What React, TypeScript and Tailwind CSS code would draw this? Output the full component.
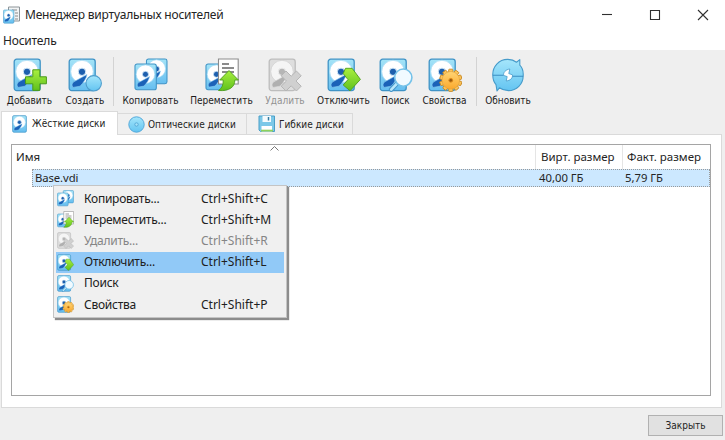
import React from 'react';

type Kind = 'disk' | 'add' | 'create' | 'copy' | 'move' | 'remove' | 'release' | 'search' | 'props' | 'refresh';

function Disk({ gray = false }: { gray?: boolean }) {
  const edge = gray ? '#bdbdbd' : '#3f93c6';
  return (
    <g>
      <rect x="1.2" y="1.2" width="26" height="31.4" rx="2.5" fill={gray ? '#dedede' : 'url(#diskFill)'} stroke={edge} strokeWidth="1.3" />
      <circle cx="14" cy="13.6" r="11.3" fill={gray ? '#f5f5f5' : '#ffffff'} stroke={gray ? '#cfcfcf' : '#a6d9f4'} strokeWidth="0.8" />
      <path d="M19 16.5C18.2 20.8 15.6 24.6 12 28.2L5 29.4C3.4 27.6 3.8 25.3 5.8 23.8Z" fill={gray ? '#b0b0b0' : '#1b62b8'} stroke={gray ? '#dddddd' : '#8ccdf2'} strokeWidth=".6" />
      <circle cx="14" cy="13.8" r="3.7" fill={gray ? '#b5b5b5' : '#1d5fae'} stroke={gray ? '#eeeeee' : '#d8ecfa'} strokeWidth="1" />
    </g>
  );
}

const teeth = [0, 36, 72, 108, 144, 180, 216, 252, 288, 324];

function Icon({ kind, size }: { kind: Kind; size: number }) {
  return (
    <svg width={size} height={size} viewBox="0 0 34 34" className="block shrink-0">
      {kind === 'copy' ? (
        <>
          <g transform="translate(11.5 0) scale(.79)"><Disk /></g>
          <g transform="translate(0 5) scale(.82)"><Disk /></g>
        </>
      ) : kind === 'move' ? (
        <g transform="translate(0 5) scale(.82)"><Disk /></g>
      ) : kind === 'refresh' ? null : (
        <Disk gray={kind === 'remove'} />
      )}
      {kind === 'add' && (
        <path d="M19.8 11.8h7v7h6.6v7h-6.6v6.6h-7v-6.6h-7.3v-7h7.3z" fill="url(#greenFill)" stroke="#4b9b1a" strokeWidth="1" strokeLinejoin="round" />
      )}
      {kind === 'create' && <circle cx="25.7" cy="25.3" r="7.7" fill="url(#blueFill)" stroke="#4f9dcc" strokeWidth="1.1" />}
      {kind === 'move' && (
        <>
          <path d="M13.5 1h19.7v25H13.5z" fill="#fff" stroke="#8b8b8b" strokeWidth="1.1" />
          <path d="M17 6h7M17 10h12M17 14h12" stroke="#666" strokeWidth="1.3" />
          <path d="M24 12.5 33.4 22h-3.6c.2 7-5.6 11.4-16.3 10.5 3.4-2.3 5-5.6 4.7-10.5h-3.5z" fill="url(#greenFill)" stroke="#4e9d1b" strokeWidth=".9" strokeLinejoin="round" />
        </>
      )}
      {kind === 'remove' && (
        <path d="m18 13 5.2 5.2 5.2-5.2 4.8 4.8-5.2 5.2 5.2 5.2-4.8 4.8-5.2-5.2L18 33l-4.8-4.8 5.2-5.2-5.2-5.2z" fill="#d0d0d0" stroke="#b5b5b5" strokeLinejoin="round" />
      )}
      {kind === 'release' && (
        <path d="M18.5 10.3h6.6L33.4 21.4 23 32.8l-6.8-5.8 4.8-5.4-4.8-6z" fill="url(#greenFill)" stroke="#4e9d1b" strokeWidth=".9" strokeLinejoin="round" />
      )}
      {kind === 'search' && (
        <>
          <path d="m18.5 25-6.3 6.6" stroke="#4394c8" strokeWidth="4.6" strokeLinecap="round" />
          <path d="m18.5 25-6.3 6.6" stroke="#b9e7fa" strokeWidth="2.6" strokeLinecap="round" />
          <circle cx="24.3" cy="19.6" r="8.6" fill="#f1faff" stroke="#75c2e9" strokeWidth="1.6" />
        </>
      )}
      {kind === 'props' && (
        <g>
          {teeth.map((a) => (
            <rect key={a} x="20.7" y="11.2" width="4.2" height="6" rx=".8" fill="#fcc45a" stroke="#c98922" strokeWidth=".9" transform={`rotate(${a} 22.8 22.3)`} />
          ))}
          <circle cx="22.8" cy="22.3" r="8.8" fill="url(#orangeFill)" stroke="#dfa03a" strokeWidth=".6" />
          <circle cx="22.8" cy="22.3" r="1.9" fill="#9a5a10" stroke="#e08d1c" />
        </g>
      )}
      {kind === 'refresh' && (
        <g strokeLinejoin="round">
          <path d="M1.8 17.2C1.4 8.5 8 1.4 16.5 1.4c3.6 0 6.6 1 9 2.8L28.8 1.6V7.2C31.4 9.8 32.4 13.8 32.2 17.4C32.2 26.2 25.6 32.6 17.4 32.6c-3.6 0-6.6-1-9-2.8L6 33 5 26.6C2.8 24 1.8 20.6 1.8 17.2z" fill="url(#blueFill)" stroke="#469bca" strokeWidth="1.1" />
          <path d="M1.8 17.2H13M20.8 18.2h11.4" stroke="#3c8fc2" strokeWidth="1.1" />
          <path d="M18.8 11c-4.2.6-6.6 3.4-6.2 6.4l3.6 1.2-1 4.4c4.4-.6 6.8-3 6.2-6.2l-3.6-1.2z" fill="#fff" stroke="#469bca" strokeWidth=".8" />
        </g>
      )}
    </svg>
  );
}

function Gradients() {
  return (
    <svg width="0" height="0" className="absolute">
      <defs>
        <linearGradient id="diskFill" x1="0" y1="0" x2="0" y2="1"><stop offset="0" stopColor="#a4e4f7" /><stop offset="1" stopColor="#65bef0" /></linearGradient>
        <linearGradient id="blueFill" x1="0" y1="0" x2="0" y2="1"><stop offset="0" stopColor="#a5e6fb" /><stop offset="1" stopColor="#63c4f1" /></linearGradient>
        <linearGradient id="greenFill" x1="0" y1="0" x2="0" y2="1"><stop offset="0" stopColor="#a9ef3f" /><stop offset="1" stopColor="#5fc11d" /></linearGradient>
        <linearGradient id="orangeFill" x1="0" y1="0" x2="0" y2="1"><stop offset="0" stopColor="#ffd474" /><stop offset="1" stopColor="#fba92d" /></linearGradient>
      </defs>
    </svg>
  );
}

function Tool({ kind, label, className }: { kind: Kind; label: string; className: string }) {
  return (
    <button className={`flex shrink-0 flex-col items-center pt-[8px] ${className}`}>
      <Icon kind={kind} size={34} />
      <span className={`whitespace-nowrap pt-px font-['DejaVu_Sans_Condensed','DejaVu_Sans',sans-serif] text-[10px] leading-4 [font-stretch:condensed] ${kind === 'remove' ? 'text-[#929292]' : 'text-[#1c1c1c]'}`}>{label}</span>
    </button>
  );
}

const menu: { kind: Kind; label: string; keys: string }[] = [
  { kind: 'copy', label: 'Копировать...', keys: 'Ctrl+Shift+C' },
  { kind: 'move', label: 'Переместить...', keys: 'Ctrl+Shift+M' },
  { kind: 'remove', label: 'Удалить...', keys: 'Ctrl+Shift+R' },
  { kind: 'release', label: 'Отключить...', keys: 'Ctrl+Shift+L' },
  { kind: 'search', label: 'Поиск', keys: '' },
  { kind: 'props', label: 'Свойства', keys: 'Ctrl+Shift+P' },
];

function ContextMenu() {
  return (
    <div className="absolute left-[53px] top-[185px] w-[234px] border border-[#c4c4c4] bg-[#f0f0f0] px-[2px] py-[2px] shadow-[2px_2px_1px_rgba(0,0,0,0.45)]">
      {menu.map((m) => (
        <div key={m.kind} className={`flex h-[21.2px] items-center pl-px text-[12px] ${m.kind === 'release' ? 'bg-[#91c9f7]' : ''} ${m.kind === 'remove' ? 'text-[#858585]' : 'text-[#202020]'}`}>
          <Icon kind={m.kind} size={17} />
          <span className="ml-[10px] w-[117px] whitespace-nowrap tracking-[-0.25px]">{m.label}</span>
          <span className="whitespace-nowrap">{m.keys}</span>
        </div>
      ))}
    </div>
  );
}

export default function App() {
  return (
    <div className="relative flex h-[440px] w-[725px] flex-col overflow-hidden bg-[#efefef] font-['Noto_Sans',sans-serif] text-[#242424]">
      <Gradients />
      <header className="flex h-[30px] shrink-0 items-center bg-white pl-[3px] text-[12px]">
        <svg width="18" height="18" viewBox="0 0 18 18" className="shrink-0">
          <path d="M5.5 1h11v14h-11z" fill="#f2f4f5" stroke="#8d9498" />
          <path d="M9 4h5M12 7h3M12 10h3M12 13h3" stroke="#888" />
          <g transform="translate(0 3.5) scale(.4 .42)"><Disk /></g>
        </svg>
        <h1 className="ml-[4px] w-[576px] whitespace-nowrap tracking-[-0.2px]">Менеджер виртуальных носителей</h1>
        <svg width="110" height="14" viewBox="0 0 110 14" fill="none" stroke="#303030" strokeWidth="1.1">
          <path d="M1 6.5h10" /><path d="M49.5 2.5h9v9h-9z" /><path d="m97 2 10 10m0-10L97 12" />
        </svg>
      </header>
      <nav className="h-[20px] shrink-0 bg-white pl-[3px] text-[12px] leading-[22px] tracking-[-0.2px]">Носитель</nav>
      <div className="flex h-[61px] shrink-0 pl-[2px]">
        <Tool kind="add" label="Добавить" className="w-[55px]" />
        <Tool kind="create" label="Создать" className="w-[56px]" />
        <i className="mt-[7px] h-[49px] w-px bg-[#d3d3d3]" />
        <Tool kind="copy" label="Копировать" className="w-[73px]" />
        <Tool kind="move" label="Переместить" className="w-[69px]" />
        <Tool kind="remove" label="Удалить" className="w-[58px]" />
        <Tool kind="release" label="Отключить" className="w-[59px]" />
        <Tool kind="search" label="Поиск" className="w-[45px]" />
        <Tool kind="props" label="Свойства" className="w-[53px]" />
        <i className="ml-[5px] mt-[7px] h-[49px] w-px bg-[#d3d3d3]" />
        <Tool kind="refresh" label="Обновить" className="w-[62px]" />
      </div>
      <div className="flex h-[23px] shrink-0 items-end pl-px font-['DejaVu_Sans_Condensed','DejaVu_Sans',sans-serif] text-[10px] [font-stretch:condensed]">
        <div className="z-10 -mb-px flex h-[24px] w-[117px] items-center border-x border-t border-[#dadada] bg-white pl-[10px]">
          <Icon kind="disk" size={18} />
          <span className="ml-[2px] whitespace-nowrap">Жёсткие диски</span>
        </div>
        <div className="flex h-[21px] w-[129px] items-center border-r border-t border-[#dadada] bg-[#f0f0f0] pl-[10px]">
          <svg width="17" height="17" viewBox="0 0 17 17" className="shrink-0"><circle cx="8.5" cy="8.5" r="7.7" fill="url(#blueFill)" stroke="#54a9da" /><circle cx="8.5" cy="8.5" r="1.7" fill="#a5e2fa" stroke="#4498ca" strokeWidth=".7" /></svg>
          <span className="ml-[3px] whitespace-nowrap pt-px">Оптические диски</span>
        </div>
        <div className="flex h-[21px] w-[106px] items-center border-r border-t border-[#dadada] bg-[#f0f0f0] pl-[11px]">
          <svg width="18" height="18" viewBox="0 0 18 18" className="shrink-0"><path d="M1 1h15.5v15.5h-14L1 15z" fill="#7cc8e8" stroke="#4a9fc8" /><path d="M4.5 1h8.5v6H4.5z" fill="#f5fbfd" /><path d="M3.5 11h10.5v5.5H3.5z" fill="#fff" /><path d="M3 15.6h12" stroke="#8ed05b" strokeWidth="1.8" /><path d="M10.5 2v3.5" stroke="#327aa0" strokeWidth="1.5" /></svg>
          <span className="ml-[3px] whitespace-nowrap pt-px">Гибкие диски</span>
        </div>
      </div>
      <main className="ml-px h-[274px] w-[721px] shrink-0 border border-[#dadada] bg-white px-[9px] pt-[9px]">
        <div className="h-[252px] w-[700px] border border-[#a5a5a5] text-[11.5px]">
          <div className="flex h-[24px] items-center pl-[4px]">
            <span className="w-[254px]">Имя</span>
            <svg width="9" height="5" viewBox="0 0 9 5" className="mb-[18px]" fill="none" stroke="#777"><path d="m.5 4.5 4-4 4 4" /></svg>
            <span className="ml-[256px] flex h-full w-[87px] items-center whitespace-nowrap border-l border-[#e5e5e5] pl-[5px]">Вирт. размер</span>
            <span className="flex h-full grow items-center whitespace-nowrap border-l border-[#e5e5e5] pl-[4px]">Факт. размер</span>
          </div>
          <div className="ml-[20px] flex h-[18px] items-center border border-dotted border-[#999] bg-[#cce8ff] pl-[2px] text-[11.3px]">
            <span className="w-[504px] tracking-[-0.1px]">Base.vdi</span><span className="w-[86px]">40,00 ГБ</span><span>5,79 ГБ</span>
          </div>
        </div>
      </main>
      <footer className="flex justify-end pr-[2px] pt-[7px]">
        <button className="h-[21px] w-[75px] border border-[#b1b1b1] bg-[#e1e1e1] font-['DejaVu_Sans_Condensed','DejaVu_Sans',sans-serif] text-[10px] [font-stretch:condensed]">Закрыть</button>
      </footer>
      <ContextMenu />
    </div>
  );
}
